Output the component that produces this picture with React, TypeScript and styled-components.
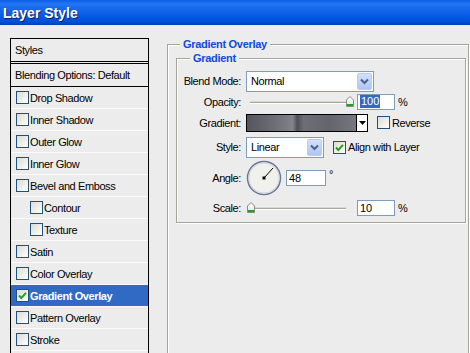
import * as React from "react";
import styled, { createGlobalStyle } from "styled-components";

const GlobalStyle = createGlobalStyle`
  body {
    margin: 0;
    background: #ececec;
    font-family: "Liberation Sans", Arial, sans-serif;
    font-size: 11px;
    color: #000;
  }
`;

const Window = styled.div`
  width: 470px;
  height: 353px;
  overflow: hidden;
  background: #ececec;
  display: flex;
  flex-direction: column;
`;

const TitleBar = styled.div`
  height: 25px;
  flex-shrink: 0;
  display: flex;
  align-items: center;
  padding-left: 3px;
  background: linear-gradient(
    to bottom,
    #0a5fe8 0%,
    #2576f2 15%,
    #1466ec 40%,
    #0357e2 70%,
    #004fd6 88%,
    #003fb8 100%
  );
  color: #fff;
  font: bold 14px "Liberation Sans", Arial, sans-serif;
  text-shadow: 1px 1px 0 #0a1d6e;
`;

const Body = styled.div`
  display: flex;
  align-items: flex-start;
  padding: 13px 0 0 10px;
`;

const StyleList = styled.div`
  width: 139px;
  height: 330px;
  flex-shrink: 0;
  box-sizing: border-box;
  border: 1px solid #000;
  letter-spacing: -0.4px;
`;

const ListHeader = styled.div<{ $double?: boolean }>`
  height: 22px;
  display: flex;
  align-items: center;
  padding-left: 4px;
  border-bottom: ${(p) => (p.$double ? "3px double #000" : "1px solid #000")};
`;

const StyleRow = styled.div<{ $indent?: boolean; $active?: boolean }>`
  height: 21px;
  display: flex;
  align-items: center;
  gap: 1px;
  padding-left: ${(p) => (p.$indent ? "19px" : "5px")};
  border-bottom: 1px solid #fbfbfb;
  background: ${(p) => (p.$active ? "#316ac5" : "transparent")};
  color: ${(p) => (p.$active ? "#fff" : "#000")};
  font-weight: ${(p) => (p.$active ? "bold" : "normal")};
`;

const Box = styled.span`
  width: 13px;
  height: 13px;
  box-sizing: border-box;
  flex-shrink: 0;
  border: 1px solid #1c5180;
  background: linear-gradient(135deg, #dcdcd5 0%, #f4f4f0 70%, #fff 100%);
  display: inline-flex;
  align-items: center;
  justify-content: center;
`;

const Panel = styled.fieldset<{ $inner?: boolean }>`
  box-sizing: border-box;
  margin: ${(p) => (p.$inner ? "1px 2px 0 8px" : "0 0 0 18px")};
  padding: ${(p) => (p.$inner ? "5px 0 6px 0" : "0")};
  width: ${(p) => (p.$inner ? "290px" : "302px")};
  height: ${(p) => (p.$inner ? "auto" : "330px")};
  min-width: 0;
  border: 1px solid #a5a598;
  box-shadow: inset 1px 1px 0 #fff, 1px 1px 0 #fff;
`;

const Legend = styled.legend<{ $inner?: boolean }>`
  margin-left: ${(p) => (p.$inner ? "13px" : "12px")};
  padding: 0 3px;
  background: #ececec;
  color: #1048e0;
  font-weight: bold;
  line-height: 13px;
  letter-spacing: -0.3px;
`;

const Row = styled.div<{ $h: number; $mt: number }>`
  display: flex;
  align-items: center;
  height: ${(p) => p.$h}px;
  margin-top: ${(p) => p.$mt}px;
  letter-spacing: -0.4px;
`;

const Label = styled.span`
  width: 64px;
  margin-right: 5px;
  text-align: right;
  flex-shrink: 0;
`;

const Select = styled.div<{ $w: number }>`
  box-sizing: border-box;
  width: ${(p) => p.$w}px;
  height: 21px;
  border: 1px solid #7f9db9;
  background: #fff;
  display: flex;
  align-items: center;
  justify-content: space-between;
  padding: 1px;
  padding-left: 4px;
`;

const DropButton = styled.span`
  width: 15px;
  height: 17px;
  box-sizing: border-box;
  border: 1px solid #b8cbf2;
  border-radius: 2px;
  background: linear-gradient(to bottom, #d2e0fd 0%, #bcd0f8 60%, #aec6f6 100%);
  display: flex;
  align-items: center;
  justify-content: center;
`;

const Slider = styled.div`
  position: relative;
  width: 108px;
  height: 17px;
  margin-right: 3px;

  &::before {
    content: "";
    position: absolute;
    left: 4px;
    right: 8px;
    top: 9px;
    height: 1px;
    background: #a9a99c;
    box-shadow: 0 1px 0 #fff, 0 -1px 0 #d8d8cf;
  }
`;

const Thumb = styled.svg`
  position: absolute;
  top: 3px;
`;

const Field = styled.div<{ $w: number; $ml?: number }>`
  box-sizing: border-box;
  width: ${(p) => p.$w}px;
  height: 16px;
  margin-left: ${(p) => p.$ml ?? 0}px;
  border: 1px solid #7f9db9;
  background: #fff;
  display: flex;
  align-items: center;
  padding-left: 2px;
  letter-spacing: 0;
`;

const Selected = styled.span`
  background: #316ac5;
  color: #fff;
  padding: 0 1px;
  line-height: 13px;
`;

const Unit = styled.span<{ $raise?: boolean }>`
  margin-left: 3px;
  align-self: ${(p) => (p.$raise ? "flex-start" : "center")};
  margin-top: ${(p) => (p.$raise ? "9px" : "0")};
`;

const GradientPicker = styled.div`
  box-sizing: border-box;
  width: 122px;
  height: 18px;
  border: 1px solid #000;
  display: flex;
`;

const Swatch = styled.div`
  flex: 1;
  border-right: 1px solid #000;
  background: linear-gradient(
    to right,
    #55555d 0%,
    #66666e 18%,
    #7a7a82 36%,
    #84848c 42%,
    #4e4e55 46%,
    #6e6e76 52%,
    #64646c 75%,
    #777780 100%
  );
`;

const SwatchArrow = styled.div`
  width: 10px;
  background: #fff;
  display: flex;
  align-items: center;
  justify-content: center;
`;

const Check = styled.label<{ $ml: number }>`
  display: flex;
  align-items: center;
  gap: 2px;
  margin-left: ${(p) => p.$ml}px;
`;

const CheckMark = () => (
  <svg width="9" height="9" viewBox="0 0 9 9">
    <path d="M1 4.5 L3.3 7 L8 1.8" fill="none" stroke="#21a121" strokeWidth="2" />
  </svg>
);

const CheckBox = ({ checked }: { checked?: boolean }) => (
  <Box>{checked && <CheckMark />}</Box>
);

const Chevron = () => (
  <svg width="9" height="7" viewBox="0 0 9 7">
    <path d="M1 1.5 L4.5 5 L8 1.5" fill="none" stroke="#4d6185" strokeWidth="2" />
  </svg>
);

const SliderControl = ({ value, min, max }: { value: number; min: number; max: number }) => {
  const left = 1 + ((value - min) / (max - min)) * 99;
  return (
    <Slider>
      <Thumb width="8" height="11" viewBox="0 0 8 11" style={{ left }}>
        <defs>
          <linearGradient id={`th${value}`} x1="0" y1="0" x2="0" y2="1">
            <stop offset="0" stopColor="#ffffff" />
            <stop offset="1" stopColor="#e4e4dc" />
          </linearGradient>
        </defs>
        <path d="M0.5 4 L4 0.5 L7.5 4 V10.5 H0.5 Z" fill={`url(#th${value})`} stroke="#8a8a80" />
        <rect x="1" y="8" width="6" height="2" fill="#21a121" />
      </Thumb>
    </Slider>
  );
};

const Dial = ({ angle }: { angle: number }) => {
  const r = (angle * Math.PI) / 180;
  const x = 18 + 13.5 * Math.cos(r);
  const y = 18 - 13.5 * Math.sin(r);
  return (
    <svg width="36" height="36" viewBox="0 0 36 36">
      <circle cx="18" cy="18" r="16.5" fill="#f0f0ec" stroke="#6b7898" strokeWidth="1.5" />
      <circle cx="18" cy="18" r="15.2" fill="none" stroke="#c4cad8" strokeWidth="0.8" />
      <line x1="18" y1="18" x2={x} y2={y} stroke="#000" strokeWidth="1" />
      <rect x="16.5" y="16.5" width="3" height="3" fill="#000" />
    </svg>
  );
};

const styles: { name: string; indent?: boolean; checked?: boolean; active?: boolean }[] = [
  { name: "Drop Shadow" },
  { name: "Inner Shadow" },
  { name: "Outer Glow" },
  { name: "Inner Glow" },
  { name: "Bevel and Emboss" },
  { name: "Contour", indent: true },
  { name: "Texture", indent: true },
  { name: "Satin" },
  { name: "Color Overlay" },
  { name: "Gradient Overlay", checked: true, active: true },
  { name: "Pattern Overlay" },
  { name: "Stroke" },
];

export default function App() {
  return (
    <Window>
      <GlobalStyle />
      <TitleBar>Layer Style</TitleBar>
      <Body>
        <StyleList>
          <ListHeader $double>Styles</ListHeader>
          <ListHeader>Blending Options: Default</ListHeader>
          {styles.map((s) => (
            <StyleRow key={s.name} $indent={s.indent} $active={s.active}>
              <CheckBox checked={s.checked} />
              <span>{s.name}</span>
            </StyleRow>
          ))}
        </StyleList>

        <Panel>
          <Legend>Gradient Overlay</Legend>
          <Panel $inner>
            <Legend $inner>Gradient</Legend>

            <Row $h={22} $mt={0}>
              <Label>Blend Mode:</Label>
              <Select $w={128}>
                <span>Normal</span>
                <DropButton>
                  <Chevron />
                </DropButton>
              </Select>
            </Row>

            <Row $h={17} $mt={1}>
              <Label>Opacity:</Label>
              <SliderControl value={100} min={0} max={100} />
              <Field $w={38}>
                <Selected>100</Selected>
              </Field>
              <Unit>%</Unit>
            </Row>

            <Row $h={19} $mt={3}>
              <Label>Gradient:</Label>
              <GradientPicker>
                <Swatch />
                <SwatchArrow>
                  <svg width="7" height="4" viewBox="0 0 7 4">
                    <path d="M0 0 H7 L3.5 4 Z" fill="#000" />
                  </svg>
                </SwatchArrow>
              </GradientPicker>
              <Check $ml={9}>
                <CheckBox />
                <span>Reverse</span>
              </Check>
            </Row>

            <Row $h={22} $mt={4}>
              <Label>Style:</Label>
              <Select $w={78}>
                <span>Linear</span>
                <DropButton>
                  <Chevron />
                </DropButton>
              </Select>
              <Check $ml={9}>
                <CheckBox checked />
                <span>Align with Layer</span>
              </Check>
            </Row>

            <Row $h={37} $mt={1}>
              <Label>Angle:</Label>
              <Dial angle={48} />
              <Field $w={40} $ml={4}>
                <span>48</span>
              </Field>
              <Unit $raise>°</Unit>
            </Row>

            <Row $h={17} $mt={3}>
              <Label>Scale:</Label>
              <SliderControl value={10} min={10} max={150} />
              <Field $w={38}>
                <span>10</span>
              </Field>
              <Unit>%</Unit>
            </Row>
          </Panel>
        </Panel>
      </Body>
    </Window>
  );
}
